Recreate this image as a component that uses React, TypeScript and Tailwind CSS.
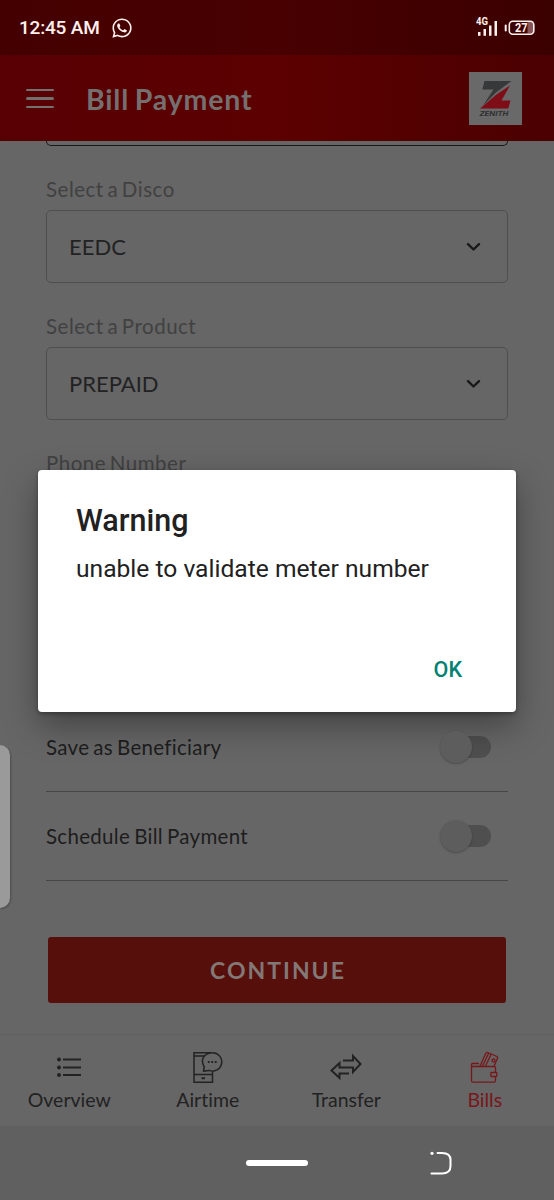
import type { ReactNode } from "react";
import { FaWhatsapp } from "react-icons/fa";

const lato = "font-['Lato',sans-serif]";
const roboto = "font-['Roboto',sans-serif]";

function StatusBar() {
  return (
    <div className={`${roboto} flex h-[55px] shrink-0 items-center justify-between bg-linear-to-r from-[#440000] via-[#480001] to-[#3b0000] pl-[19px] pr-[18px] text-[#fff0ee]`}>
      <div className="flex items-center gap-[12px]">
        <span className="w-[80px] whitespace-nowrap text-[19px] font-medium leading-none tracking-[-0.2px]">12:45 AM</span>
        <FaWhatsapp className="size-[22px]" />
      </div>
      <svg width="60" height="22" viewBox="0 0 60 22" fill="currentColor">
        <text x="0" y="7.5" fontSize="10" fontWeight="700" fontFamily="Roboto" textLength="12" lengthAdjust="spacingAndGlyphs">4G</text>
        <rect x="2" y="15" width="2.5" height="3.8" />
        <rect x="7.5" y="12" width="2.5" height="6.8" />
        <rect x="13" y="8.5" width="2.5" height="10.3" />
        <rect x="18.5" y="4" width="2.5" height="14.8" />
        <rect x="28.7" y="7.5" width="2" height="7" rx="1" />
        <rect x="51.5" y="4.5" width="5.5" height="12" fill="#875557" />
        <rect x="33.3" y="4.2" width="24.5" height="13" rx="3.5" fill="none" stroke="currentColor" strokeWidth="1.6" />
        <text x="39" y="15.2" fontSize="12.5" fontWeight="700" fontFamily="Roboto" textLength="12.5" lengthAdjust="spacingAndGlyphs">27</text>
      </svg>
    </div>
  );
}

function ZenithLogo() {
  return (
    <svg width="53" height="53" viewBox="0 0 53 53" className="bg-[#696969]">
      <path d="M15.5 9H42.5L27 20.5L14 33.5L24.5 17.5H13.3Z" fill="#373839" />
      <path d="M41 13.5L32.5 28.5H41.5L39.3 36.5H11L27.5 22.5Z" fill="#7f0d18" />
      <text x="10.5" y="44.2" fontSize="8" fontWeight="700" fontStyle="italic" fontFamily="Roboto" textLength="29" lengthAdjust="spacingAndGlyphs" fill="#303132">ZENITH</text>
    </svg>
  );
}

function Header() {
  return (
    <div className="flex h-[86px] shrink-0 items-center bg-linear-to-r from-[#570003] via-[#5c0001] to-[#4b0001] pl-[26px] pr-[32px]">
      <div className="mt-px flex w-[28px] flex-col gap-[6px]">
        <span className="h-[2.5px] rounded-full bg-[#757070]" />
        <span className="h-[2.5px] rounded-full bg-[#757070]" />
        <span className="h-[2.5px] rounded-full bg-[#757070]" />
      </div>
      <h1 className={`${lato} ml-[32px] mt-[2px] flex-1 whitespace-nowrap text-[28.5px] font-bold leading-none tracking-[0.8px] text-[#757070] [word-spacing:-2px]`}>Bill Payment</h1>
      <ZenithLogo />
    </div>
  );
}

function FieldLabel({ children }: { children: ReactNode }) {
  return (
    <div className="flex h-[35px] items-start whitespace-nowrap pt-[4px] text-[20.5px] leading-[21px] tracking-[0.5px] text-[#414141] [word-spacing:-2px]">{children}</div>
  );
}

function SelectField({ label, value }: { label: string; value: string }) {
  return (
    <div className="mb-[29px]">
      <FieldLabel>{label}</FieldLabel>
      <div className="flex h-[73px] items-center justify-between rounded-[5px] border-[1.5px] border-[#4f4f4f] pl-[22px] pr-[26px] text-[22px] text-[#222]">
        <span>{value}</span>
        <svg width="15" height="10" viewBox="0 0 15 10" fill="none" stroke="#191919" strokeWidth="2.4" strokeLinecap="round" strokeLinejoin="round">
          <path d="M2 2.2L7.5 7.5L13 2.2" />
        </svg>
      </div>
    </div>
  );
}

function ToggleRow({ label }: { label: string }) {
  return (
    <div className="flex h-[89px] items-center justify-between border-b-[1.5px] border-[#474747] pr-[17px] text-[20.5px] text-[#1d1d1d]">
      <span className="tracking-[0.3px] [word-spacing:-1.5px]">{label}</span>
      <div className="flex items-center">
        <div className="z-10 -mr-[17px] size-[32px] rounded-full bg-[#5d5d5d] shadow-[0_1px_2px_rgba(0,0,0,0.25)]" />
        <div className="h-[22px] w-[36px] rounded-full bg-[#4f4f4f]" />
      </div>
    </div>
  );
}

function TabItem({ label, active, children }: { label: string; active?: boolean; children: ReactNode }) {
  return (
    <div className={`flex flex-1 flex-col items-center pt-[16px] ${active ? "text-[#78171a]" : "text-[#222]"}`}>
      <svg width="34" height="34" viewBox="0 0 34 34" fill="none" stroke="currentColor" strokeWidth="1.5" strokeLinejoin="round">
        {children}
      </svg>
      <span className="mt-[3px] whitespace-nowrap text-[19.5px] leading-[23px] [font-variant-ligatures:none]">{label}</span>
    </div>
  );
}

function TabBar() {
  return (
    <div className="flex h-[92px] shrink-0 border-t border-[#606060] bg-[#666]">
      <TabItem label="Overview">
        <g strokeWidth="2">
          <path d="M11 8.5H29M11 16.5H29M11 24H29" />
        </g>
        <g fill="currentColor" stroke="none">
          <circle cx="7" cy="8.5" r="2" />
          <circle cx="7" cy="16.5" r="2" />
          <circle cx="7" cy="24" r="2" />
        </g>
      </TabItem>
      <TabItem label="Airtime">
        <path d="M20 1.7H3V31.2H21.5V21" strokeLinejoin="miter" />
        <path d="M3 5H14M3 23.5H21.5" />
        <path d="M10.5 27.2H14" strokeWidth="2" />
        <path d="M13.3 16C8 7.5 15 1.7 21.2 1.7A9.2 9.2 0 1 1 18 19.4L12.5 20.2Z" />
        <path d="M16.8 11H18.6M20.3 11H22.1M23.8 11H25.6" strokeWidth="1.8" />
      </TabItem>
      <TabItem label="Transfer">
        <path d="M14 9.5H24V5L31.5 13L24 21V16.5H10.5V12L2.5 19.5L10.5 27V22.5H20" strokeWidth="2" strokeLinejoin="miter" />
      </TabItem>
      <TabItem label="Bills" active>
        <g strokeWidth="1.3">
          <path d="M11 12.5H4.5Q3.5 12.5 3.5 13.5V29.7Q3.5 31.2 5 31.2H26Q27.5 31.2 27.5 29.7V25.5M27.5 21.5V17Q27.5 15.5 26 15.5H3.5" />
          <rect x="22.8" y="21.5" width="6" height="4" rx="0.8" />
          <path d="M12 15L18 2Q18.5 1 19.5 1.5L29 5.5Q30 6 29.5 7L26 15.5M14.5 15L20.5 2.5M17.5 15L23 3.5" />
          <circle cx="25.5" cy="9.5" r="1.5" />
        </g>
      </TabItem>
    </div>
  );
}

function SystemNav() {
  return (
    <div className="flex h-[74px] shrink-0 items-center bg-[#606060] pl-[246px]">
      <div className="h-[6px] w-[62px] rounded-full bg-white" />
      <svg className="ml-[120px]" width="26" height="28" viewBox="0 0 26 28" fill="none" stroke="white" strokeWidth="2" strokeLinecap="round">
        <path d="M9.5 4H14Q22.5 4 22.5 11V17Q22.5 24.5 14 24.5H3.5" />
        <circle cx="4" cy="4.3" r="1.6" fill="white" stroke="none" />
      </svg>
    </div>
  );
}

function WarningDialog() {
  return (
    <div className={`${roboto} absolute left-[38px] top-[470px] flex h-[242px] w-[478px] flex-col rounded-[4px] bg-white pl-[38px] pr-[54px] text-[#212121] shadow-[0_14px_34px_rgba(0,0,0,0.35),0_2px_4px_rgba(0,0,0,0.3)]`}>
      <h2 className="mt-[32px] text-[30.5px] font-medium leading-[38px]">Warning</h2>
      <p className="mt-[14px] whitespace-nowrap text-[24.6px] leading-[30px]">unable to validate meter number</p>
      <button className="mt-[72px] self-end text-[21.5px] font-medium leading-[28px] text-[#008271]">OK</button>
    </div>
  );
}

export default function App() {
  return (
    <div className={`${lato} relative flex h-[1200px] w-[554px] flex-col overflow-hidden bg-[#666]`}>
      <StatusBar />
      <Header />
      <div className="flex flex-1 flex-col px-[46px]">
        <div className="mb-[29px] h-[5px] shrink-0 rounded-b-[5px] border-x-[1.5px] border-b-[1.5px] border-[#171717]" />
        <SelectField label="Select a Disco" value="EEDC" />
        <SelectField label="Select a Product" value="PREPAID" />
        <div className="mb-[219px]">
          <FieldLabel>Phone Number</FieldLabel>
        </div>
        <ToggleRow label="Save as Beneficiary" />
        <ToggleRow label="Schedule Bill Payment" />
        <button className="mx-[2px] mt-[56px] h-[66px] rounded-[3px] bg-[#570f0c] pl-[2px] text-[23px] font-bold tracking-[2px] text-[#827876]">CONTINUE</button>
      </div>
      <TabBar />
      <SystemNav />
      <div className="absolute left-0 top-[745px] h-[163px] w-[10px] rounded-r-[10px] bg-[#9a9a9a] shadow-[1px_1px_2px_rgba(0,0,0,0.25)]" />
      <WarningDialog />
    </div>
  );
}
